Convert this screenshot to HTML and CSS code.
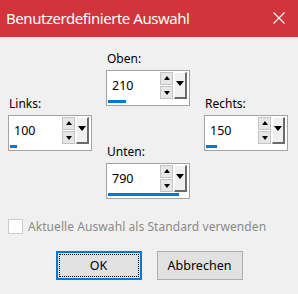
FILE: index.html
```html
<!DOCTYPE html>
<html lang="de">
<head>
	<meta charset="UTF-8">
	<title>Benutzerdefinierte Auswahl</title>
	<link rel="stylesheet" href="styles.css">
</head>
<body>
	<div class="dialog">
		<div class="titlebar">
			<span class="title">Benutzerdefinierte Auswahl</span>
			<svg class="close" width="12" height="12" viewBox="0 0 12 12">
				<path d="M0.5 0.5 L11.5 11.5 M11.5 0.5 L0.5 11.5" stroke="#fff" stroke-width="1.1" fill="none"/>
			</svg>
		</div>

		<div class="content">
			<div class="edges">
				<div class="col side">
					<div class="field">
						<div class="label">Links:</div>
						<div class="spin">
							<span class="value">100</span>
							<span class="arrows"><span class="arrow up"></span><span class="arrow down"></span></span>
							<span class="drop"></span>
							<span class="bar" style="width:7px"></span>
						</div>
					</div>
				</div>

				<div class="col middle">
					<div class="field">
						<div class="label">Oben:</div>
						<div class="spin">
							<span class="value">210</span>
							<span class="arrows"><span class="arrow up"></span><span class="arrow down"></span></span>
							<span class="drop"></span>
							<span class="bar" style="width:18px"></span>
						</div>
					</div>
					<div class="field">
						<div class="label">Unten:</div>
						<div class="spin">
							<span class="value">790</span>
							<span class="arrows"><span class="arrow up"></span><span class="arrow down"></span></span>
							<span class="drop"></span>
							<span class="bar" style="width:71px"></span>
						</div>
					</div>
				</div>

				<div class="col side">
					<div class="field">
						<div class="label">Rechts:</div>
						<div class="spin">
							<span class="value">150</span>
							<span class="arrows"><span class="arrow up"></span><span class="arrow down"></span></span>
							<span class="drop"></span>
							<span class="bar" style="width:11px"></span>
						</div>
					</div>
				</div>
			</div>

			<div class="check">
				<span class="checkbox"></span>
				<span class="check-text">Aktuelle Auswahl als Standard verwenden</span>
			</div>

			<div class="buttons">
				<button class="btn default"><span class="focus">OK</span></button>
				<button class="btn">Abbrechen</button>
			</div>
		</div>
	</div>
</body>
</html>
```

FILE: styles.css
```css
*{
	margin:0;
	padding:0;
	box-sizing: border-box;
}
body{
	background:#f0f0f0;
	font-family: "Noto Sans", "Open Sans", sans-serif;
	font-size:12px;
	color:#000;
}
.dialog{
	width:298px;
	height:294px;
}
.titlebar{
	height:37px;
	background:#d1343a;
	display:flex;
	align-items:center;
	justify-content:space-between;
	padding:0 13px 0 6px;
}
.title{
	color:#fff;
	font-size:15px;
	letter-spacing:-0.45px;
	margin-top:-1px;
}
.close{
	display:block;
	margin-top:-1px;
}
.content{
	padding:14px 0 0 8px;
}
.edges{
	display:flex;
	gap:14px;
	height:148px;
}
.col{
	width:84px;
	display:flex;
	flex-direction:column;
}
.side{
	justify-content:center;
	padding-bottom:3px;
}
.middle{
	justify-content:space-between;
}
.label{
	line-height:16px;
	margin-bottom:3px;
	padding-left:1px;
}
.spin{
	width:84px;
	height:36px;
	background:#fff;
	border:1px solid #a3a3a3;
	padding:1px 2px 2px 1px;
	display:grid;
	grid-template-columns:1fr 13px 13px;
	grid-template-rows:27px 3px;
	column-gap:1px;
	row-gap:1px;
}
.value{
	padding-left:4px;
	display:flex;
	align-items:center;
	font-size:12.5px;
}
.arrows{
	display:flex;
	flex-direction:column;
	gap:1px;
}
.arrow{
	height:13px;
	background:#e6e6e6;
	border:1px solid #c4c4c4;
	position:relative;
}
.arrow::after{
	content:"";
	position:absolute;
	left:3px;
	border-left:3px solid transparent;
	border-right:3px solid transparent;
}
.arrow.up::after{
	top:3px;
	border-bottom:4px solid #000;
}
.arrow.down::after{
	top:4px;
	border-top:4px solid #000;
}
.drop{
	background:#f0f0f0;
	border-top:1px solid #fff;
	border-left:1px solid #fff;
	border-right:2px solid #6b6b6b;
	border-bottom:2px solid #6b6b6b;
	position:relative;
}
.drop::after{
	content:"";
	position:absolute;
	top:8px;
	left:1px;
	border-left:4px solid transparent;
	border-right:4px solid transparent;
	border-top:5px solid #000;
}
.bar{
	grid-column:1 / -1;
	height:3px;
	background:#0078d7;
}
.check{
	display:flex;
	align-items:center;
	gap:5px;
	margin-top:19px;
	height:16px;
}
.checkbox{
	width:15px;
	height:15px;
	background:#fff;
	border:1px solid #cccccc;
}
.check-text{
	color:#8a8a8a;
	font-size:12px;
	letter-spacing:0.07px;
}
.buttons{
	display:flex;
	justify-content:center;
	gap:15px;
	margin-top:17px;
	padding-right:8px;
}
.btn{
	width:86px;
	height:29px;
	background:#e1e1e1;
	border:1px solid #adadad;
	font-family: "Noto Sans", "Open Sans", sans-serif;
	font-size:12.5px;
	color:#000;
}
.btn.default{
	border:2px solid #0078d7;
	padding:1px;
}
.focus{
	display:flex;
	align-items:center;
	justify-content:center;
	width:100%;
	height:100%;
	border:1px dotted #000;
}
```
